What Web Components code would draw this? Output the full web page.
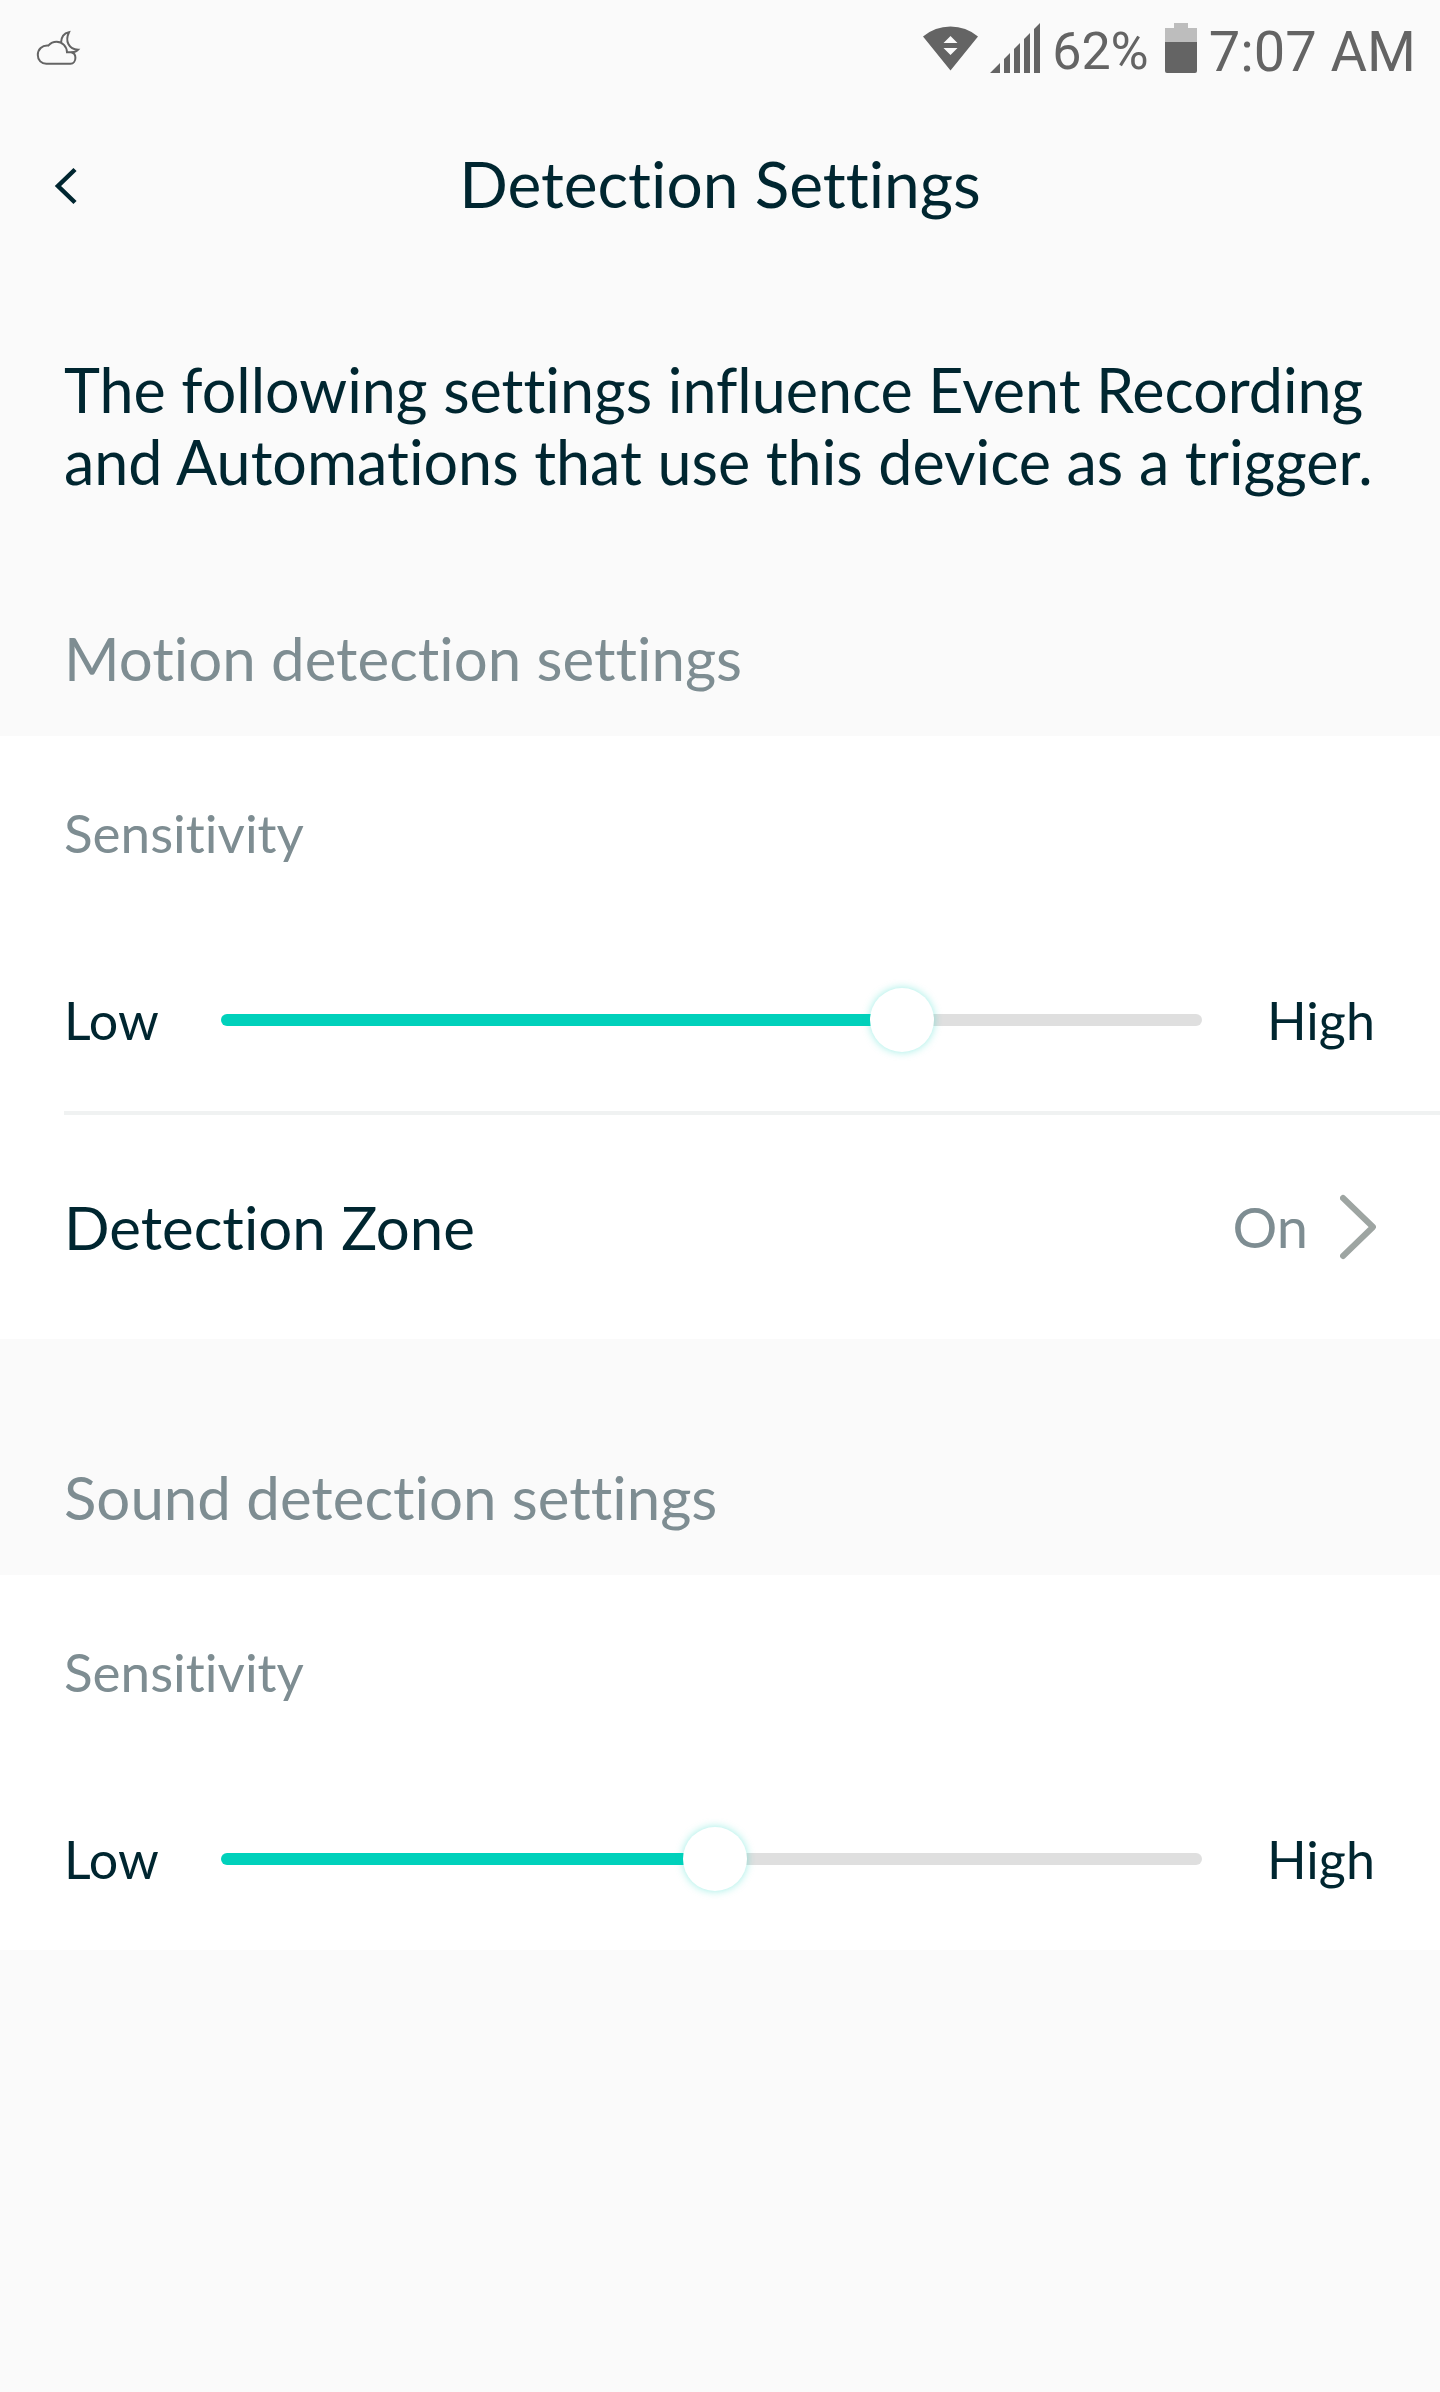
<!DOCTYPE html>
<html lang="en">
<head>
<meta charset="utf-8">
<meta name="viewport" content="width=device-width, initial-scale=1">
<title>Detection Settings</title>
<style>
  body {
    margin: 0;
    background: #fafafa;
    color: #002630;
    font-family: Lato, "Open Sans", sans-serif;
    font-variant-ligatures: none;
    --ink: #002630;
    --muted: #7e8d92;
    --accent: #00d1bb;
    --rail: #dfdfdf;
    --line: #f0f2f2;
    --edge: 64px;
  }
</style>
</head>
<body>
<settings-page></settings-page>

<script>
const define = (name, html, setup) => {
  const template = document.createElement('template');
  template.innerHTML = html;
  customElements.define(name, class extends HTMLElement {
    constructor() {
      super();
      this.attachShadow({ mode: 'open' }).append(template.content.cloneNode(true));
    }
    connectedCallback() {
      if (setup) setup(this, this.shadowRoot);
    }
  });
};

define('status-bar', `
  <style>
    :host { display: flex; align-items: center; justify-content: space-between; height: 100px; padding: 0 24px 0 36px; color: #646464; font-family: Roboto, sans-serif; line-height: 64px; }
    .right { display: flex; align-items: center; }
    svg { display: block; flex: none; }
    span { padding-top: 3px; }
    .wifi { margin-right: 12px; }
    .signal { margin-right: 12px; }
    .percent { font-size: 52px; margin-right: 16px; }
    .battery { margin-right: 12px; }
    .time { font-size: 56px; }
  </style>
  <svg width="46" height="56" viewBox="0 0 46 56" fill="none" stroke="currentColor" stroke-width="2" role="img" aria-label="Cloudy night">
    <path d="M12.3 23.6C6 23 1.8 27.600 1.800 33C1.800 38.300 5.500 41.800 10.300 41.800H34.500C37.500 41.800 39.400 39 39.400 35.800C39.400 33 37.800 31 35.500 30.300H31C30.800 24.500 26.500 19.800 20.500 19.800C17 19.800 14.300 21.500 12.300 23.600Z"/>
    <path d="M25 20.700C25.200 15.500 28 11.200 33 10.200C28.800 19 32.500 27 42.200 27.700C40.500 29.600 38 30.400 35.500 30.300"/>
  </svg>
  <div class="right">
    <svg class="wifi" width="55" height="56" viewBox="0 0 55 56" fill="currentColor" role="img" aria-label="Wi-Fi">
      <path fill-rule="evenodd" d="M0 14.500Q12 4.500 27.500 4.500T55 14.500L27.500 48.500ZM20.500 21H34.500L27.500 14ZM20.500 26H34.500L27.500 33Z"/>
    </svg>
    <svg class="signal" width="50" height="56" viewBox="0 0 50 56" fill="currentColor" role="img" aria-label="Signal">
      <path d="M0 51L10 41V51ZM14 51V37L20 31V51ZM24 51V27L30 21V51ZM34 51V17L40 11V51ZM44 51V7L50 1V51Z"/>
    </svg>
    <span class="percent">62%</span>
    <svg class="battery" width="32" height="56" viewBox="0 0 32 56" role="img" aria-label="Battery">
      <path fill="#bdbdbd" d="M0 20V6H9V1H23V6H32V20Z"/>
      <path fill="currentColor" d="M0 20H32V49Q32 51 30 51H2Q0 51 0 49Z"/>
    </svg>
    <span class="time">7:07 AM</span>
  </div>`);

define('page-header', `
  <style>
    :host { display: grid; grid-template-columns: 1fr auto 1fr; align-items: center; box-sizing: border-box; height: 164px; padding: 4px 44px 0; }
    button { justify-self: start; padding: 0; border: 0; background: none; color: inherit; }
    svg { display: block; }
    h1 { margin: 0; font-size: 64px; font-weight: 400; line-height: 72px; }
  </style>
  <button type="button" aria-label="Back">
    <svg width="48" height="72" viewBox="0 0 48 72" fill="none" stroke="currentColor" stroke-width="4.500"><path d="M31 21.500L14 38L31 54.500"/></svg>
  </button>
  <h1><slot></slot></h1>`);

define('intro-text', `
  <style>
    :host { display: block; padding: 90px 44px 2px var(--edge); }
    p { margin: 0; font-size: 61px; line-height: 72px; }
  </style>
  <p><slot></slot></p>`);

define('settings-section', `
  <style>
    :host { display: block; }
    h2 { margin: 0; padding: 122px var(--edge) 42px; color: var(--muted); font-size: 60px; font-weight: 400; line-height: 72px; }
    .card { background: #fff; }
  </style>
  <h2></h2>
  <div class="card"><slot></slot></div>`,
  (host, root) => { root.querySelector('h2').textContent = host.getAttribute('heading'); });

define('sensitivity-slider', `
  <style>
    :host { display: flex; flex-direction: column; gap: 123px; padding: 65px var(--edge) 59px; font-size: 52px; line-height: 64px; }
    label { color: var(--muted); font-size: 53px; }
    .row { display: flex; align-items: center; gap: 64px; }
    .low { width: 93px; }
    .high { min-width: 110px; text-align: center; }
    input { -webkit-appearance: none; appearance: none; flex: 1; min-width: 0; height: 64px; margin: 0; background: none; }
    input::-webkit-slider-runnable-track {
      height: 12px; border-radius: 6px;
      background: linear-gradient(to right, var(--accent) calc(32px + (100% - 64px) * var(--ratio)), var(--rail) 0);
    }
    input::-webkit-slider-thumb {
      -webkit-appearance: none; width: 64px; height: 64px; margin-top: -26px;
      border-radius: 50%; background: #fff; box-shadow: 0 0 8px rgba(0, 209, 187, .4);
    }
  </style>
  <label for="level">Sensitivity</label>
  <div class="row">
    <span class="low">Low</span>
    <input id="level" type="range" min="0" max="1000">
    <span class="high">High</span>
  </div>`,
  (host, root) => {
    const input = root.querySelector('input');
    const paint = () => input.style.setProperty('--ratio', input.value / input.max);
    input.value = host.getAttribute('value');
    input.addEventListener('input', paint);
    paint();
  });

define('link-row', `
  <style>
    :host { display: block; padding-left: var(--edge); }
    .rule { height: 4px; background: var(--line); }
    a { display: flex; align-items: center; height: 224px; padding-right: var(--edge); color: var(--ink); text-decoration: none; font-size: 60px; line-height: 72px; }
    .name { flex: 1; }
    .value { margin-right: 32px; color: var(--muted); font-size: 56px; }
    svg { display: block; flex: none; }
  </style>
  <div class="rule"></div>
  <a href="#zone">
    <span class="name"><slot></slot></span>
    <span class="value"></span>
    <svg width="36" height="66" viewBox="0 0 36 66" fill="none" stroke="#9ea5a2" stroke-width="6" stroke-linecap="round" stroke-linejoin="round" aria-hidden="true"><path d="M3 4L33 33L3 62"/></svg>
  </a>`,
  (host, root) => { root.querySelector('.value').textContent = host.getAttribute('value'); });

define('settings-page', `
  <style>:host, main { display: block; }</style>
  <status-bar></status-bar>
  <page-header>Detection Settings</page-header>
  <main>
    <intro-text>The following settings influence Event Recording and Automations that use this device as a trigger.</intro-text>
    <settings-section heading="Motion detection settings">
      <sensitivity-slider value="708"></sensitivity-slider>
      <link-row value="On">Detection Zone</link-row>
    </settings-section>
    <settings-section heading="Sound detection settings">
      <sensitivity-slider value="504"></sensitivity-slider>
    </settings-section>
  </main>`);
</script>
</body>
</html>
